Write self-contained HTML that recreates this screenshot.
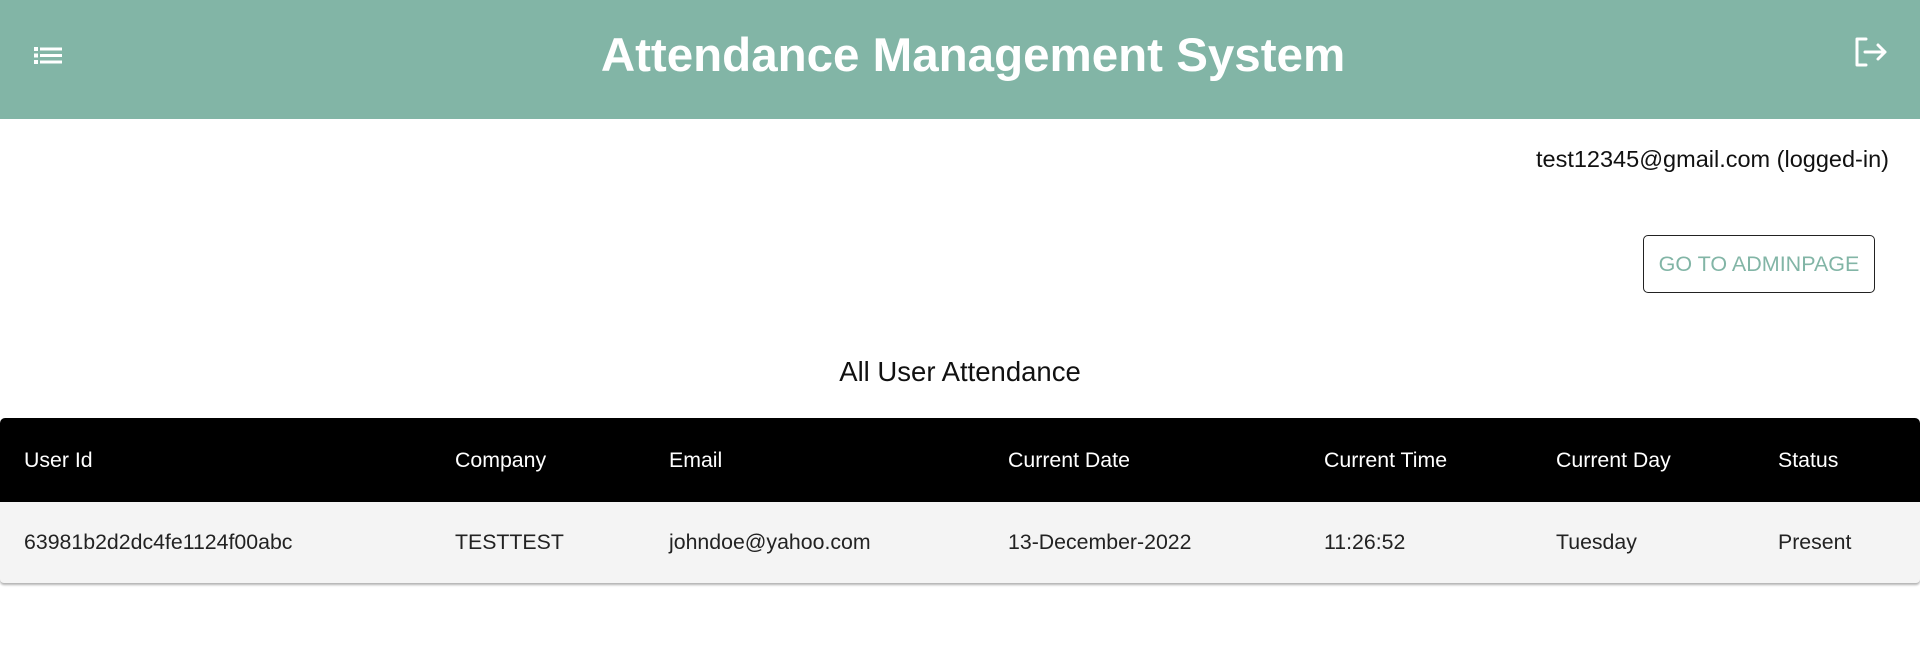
<!DOCTYPE html>
<html><head><style>
body{margin:0;width:1920px;height:651px;background:#fff;font-family:"Liberation Sans",sans-serif;position:relative;overflow:hidden}
.hdr{position:absolute;left:0;top:0;width:1920px;height:119px;background:#82b5a6}
.title{position:absolute;left:0;width:1920px;top:26px;text-align:center;color:#fff;font-weight:bold;font-size:47.5px;line-height:60px;padding-left:26px;box-sizing:border-box}
.email{position:absolute;right:31px;top:146px;font-size:23.5px;color:#111}
.btn{position:absolute;left:1643px;top:235px;width:230px;height:56px;border:1.5px solid #222;border-radius:5px;color:#82b5a6;font-size:21.5px;text-align:center;line-height:56px}
.sub{position:absolute;left:0;width:1920px;top:356px;text-align:center;font-size:27.5px;color:#111}
.th{position:absolute;left:0;top:418px;width:1920px;height:84px;background:#000;border-radius:5px 5px 0 0}
.tr{position:absolute;left:0;top:502px;width:1920px;height:81px;background:#f4f4f4;box-shadow:0 2px 2px rgba(0,0,0,.3);border-radius:0 0 4px 4px}
.c{position:absolute;font-size:21.3px;top:0}
.th .c{color:#fff;line-height:84px}
.tr .c{color:#222;line-height:81px}
</style></head><body>
<div class="hdr">
<svg style="position:absolute;left:34px;top:47px" width="28" height="17" viewBox="0 0 28 17"><g fill="#fff"><rect x="0" y="0" width="4" height="4"/><rect x="0" y="6.5" width="4" height="4"/><rect x="0" y="13" width="4" height="4"/><rect x="6" y="0.5" width="22" height="3"/><rect x="6" y="7" width="22" height="3"/><rect x="6" y="13.5" width="22" height="3"/></g></svg>
<div class="title">Attendance Management System</div>
<svg style="position:absolute;left:1854px;top:37px" width="34" height="30" viewBox="0 0 34 30"><g fill="none" stroke="#fff" stroke-width="3" stroke-linecap="round" stroke-linejoin="round"><path d="M12 2H3v26h9"/><path d="M11 15h20M24 8l7 7-7 7"/></g></svg>
</div>
<div class="email">test12345@gmail.com (logged-in)</div>
<div class="btn">GO TO ADMINPAGE</div>
<div class="sub">All User Attendance</div>
<div class="th">
<span class="c" style="left:24px">User Id</span><span class="c" style="left:455px">Company</span><span class="c" style="left:669px">Email</span><span class="c" style="left:1008px">Current Date</span><span class="c" style="left:1324px">Current Time</span><span class="c" style="left:1556px">Current Day</span><span class="c" style="left:1778px">Status</span>
</div>
<div class="tr">
<span class="c" style="left:24px">63981b2d2dc4fe1124f00abc</span><span class="c" style="left:455px">TESTTEST</span><span class="c" style="left:669px">johndoe@yahoo.com</span><span class="c" style="left:1008px">13-December-2022</span><span class="c" style="left:1324px">11:26:52</span><span class="c" style="left:1556px">Tuesday</span><span class="c" style="left:1778px">Present</span>
</div>
</body></html>
